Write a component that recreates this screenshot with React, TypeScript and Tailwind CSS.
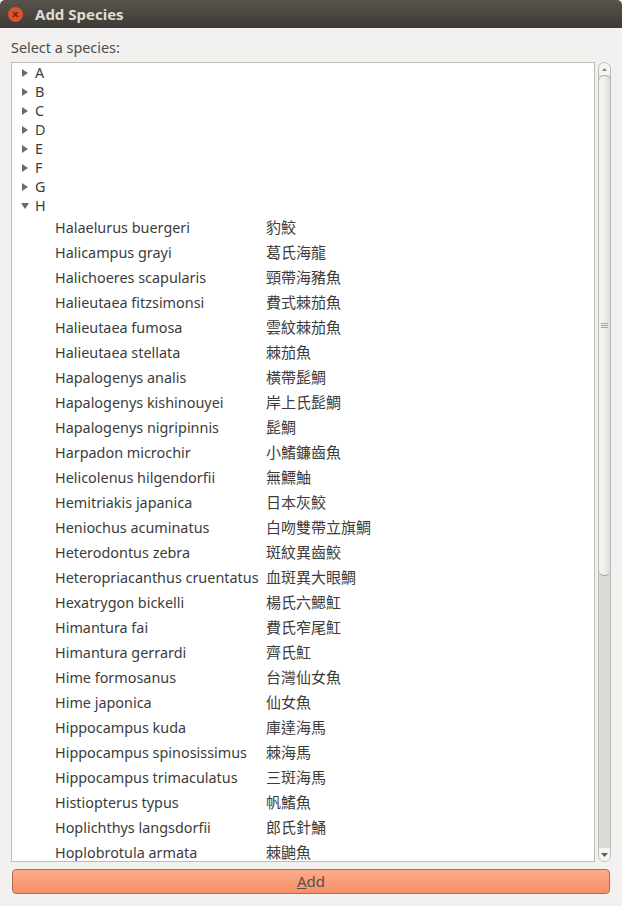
const LETTERS = ["A", "B", "C", "D", "E", "F", "G"];

const SPECIES: [string, string][] = [
  ["Halaelurus buergeri", "豹鮫"],
  ["Halicampus grayi", "葛氏海龍"],
  ["Halichoeres scapularis", "頸帶海豬魚"],
  ["Halieutaea fitzsimonsi", "費式棘茄魚"],
  ["Halieutaea fumosa", "雲紋棘茄魚"],
  ["Halieutaea stellata", "棘茄魚"],
  ["Hapalogenys analis", "橫帶髭鯛"],
  ["Hapalogenys kishinouyei", "岸上氏髭鯛"],
  ["Hapalogenys nigripinnis", "髭鯛"],
  ["Harpadon microchir", "小鰭鐮齒魚"],
  ["Helicolenus hilgendorfii", "無鰾鮋"],
  ["Hemitriakis japanica", "日本灰鮫"],
  ["Heniochus acuminatus", "白吻雙帶立旗鯛"],
  ["Heterodontus zebra", "斑紋異齒鮫"],
  ["Heteropriacanthus cruentatus", "血斑異大眼鯛"],
  ["Hexatrygon bickelli", "楊氏六鰓魟"],
  ["Himantura fai", "費氏窄尾魟"],
  ["Himantura gerrardi", "齊氏魟"],
  ["Hime formosanus", "台灣仙女魚"],
  ["Hime japonica", "仙女魚"],
  ["Hippocampus kuda", "庫達海馬"],
  ["Hippocampus spinosissimus", "棘海馬"],
  ["Hippocampus trimaculatus", "三斑海馬"],
  ["Histiopterus typus", "帆鰭魚"],
  ["Hoplichthys langsdorfii", "郎氏針鯒"],
  ["Hoplobrotula armata", "棘鼬魚"],
];

const Arrow = ({ open }: { open?: boolean }) => (
  <svg width="8" height="8" viewBox="0 0 8 8" className="shrink-0">
    <path d={open ? "M0 1 H8 L4 7 Z" : "M1 0 V8 L7 4 Z"} fill="#6b6b66" />
  </svg>
);

const GroupRow = ({ letter, open }: { letter: string; open?: boolean }) => (
  <div className="flex h-[19px] items-center pl-[9px]">
    <Arrow open={open} />
    <span className="ml-[6px]">{letter}</span>
  </div>
);

const App = () => {
  return (
    <div className="flex h-[906px] w-[622px] flex-col overflow-hidden bg-[#f2f1f0] font-['Noto_Sans','Noto_Sans_CJK_TC',sans-serif] text-[14.4px] text-[#3c3c3c]">
      {/* title bar */}
      <div className="flex h-[28px] shrink-0 items-center rounded-t-[5px] bg-gradient-to-b from-[#57544c] to-[#3d3b35] pl-[8px]">
        <div className="flex h-[15px] w-[15px] items-center justify-center rounded-full bg-[#e0532a]">
          <svg width="7" height="7" viewBox="0 0 7 7">
            <path d="M1 1 L6 6 M6 1 L1 6" stroke="#5a2412" strokeWidth="1.2" />
          </svg>
        </div>
        <span className="ml-[12px] text-[15px] font-bold text-[#dfdbd2]">Add Species</span>
      </div>

      <div className="flex min-h-0 flex-1 flex-col px-[11px] pb-[12px]">
        <div className="flex h-[34px] shrink-0 items-end pb-[3px] text-[#4c4c4c]">Select a species:</div>

        <div className="flex h-[800px] shrink-0 gap-[3px]">
          {/* tree */}
          <div className="h-full w-[584px] overflow-hidden border border-[#bfbcb7] bg-white">
            {LETTERS.map((l) => (
              <GroupRow key={l} letter={l} />
            ))}
            <GroupRow letter="H" open />
            {SPECIES.map(([latin, zh]) => (
              <div key={latin} className="flex h-[25px] items-center pl-[43px] whitespace-nowrap">
                <span className="w-[211px] shrink-0">{latin}</span>
                <span className="text-[15px]">{zh}</span>
              </div>
            ))}
          </div>

          {/* scrollbar */}
          <div className="flex h-full w-[13px] flex-col items-center overflow-hidden rounded-full border border-[#bdbab5] bg-[#dcdad7]">
            <div className="flex h-[12px] w-full shrink-0 items-center justify-center bg-[#f6f5f4]">
              <svg width="5" height="3" viewBox="0 0 5 3">
                <path d="M0 3 H5 L2.5 0 Z" fill="#8a8a86" />
              </svg>
            </div>
            <div className="flex h-[501px] w-full shrink-0 items-center justify-center rounded-[6px] border-y border-[#a9a6a1] bg-gradient-to-r from-[#f5f5f4] via-[#f0efee] to-[#dedcda]">
              <div className="flex w-[7px] flex-col gap-[1px]">
                <div className="h-[1px] bg-[#a5a5a2]" />
                <div className="h-[1px] bg-[#a5a5a2]" />
                <div className="h-[1px] bg-[#a5a5a2]" />
              </div>
            </div>
            <div className="flex-1" />
            <div className="flex h-[13px] w-full shrink-0 items-center justify-center bg-[#f6f5f4]">
              <svg width="7" height="4" viewBox="0 0 7 4">
                <path d="M0 0 H7 L3.5 4 Z" fill="#5f5f5b" />
              </svg>
            </div>
          </div>
        </div>

        <button className="mt-[7px] ml-[1px] flex h-[25px] w-[598px] shrink-0 items-center justify-center rounded-[4px] border border-[#a8705a] bg-gradient-to-b from-[#ffab8a] to-[#f58f68] text-[15px] text-[#55504d]">
          <span>
            <span className="underline">A</span>dd
          </span>
        </button>
      </div>
    </div>
  );
};

export default App;
